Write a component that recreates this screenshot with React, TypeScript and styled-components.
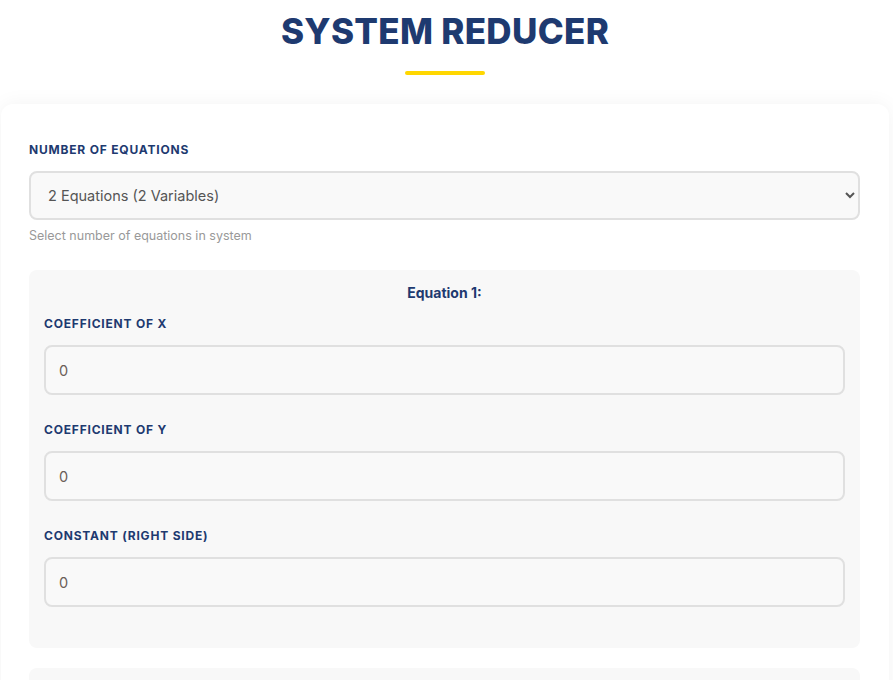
import styled, { createGlobalStyle } from 'styled-components'

const GlobalStyle = createGlobalStyle`
  * {
    box-sizing: border-box;
  }
  body {
    margin: 0;
    background: #ffffff;
    font-family: "Inter", "Open Sans", sans-serif;
    color: #333;
  }
`

const Page = styled.div`
  padding: 0 4px 0 1px;
`

const Header = styled.header`
  display: flex;
  flex-direction: column;
  align-items: center;
  padding-top: 9px;
  height: 104px;
`

const Title = styled.h1`
  margin: 0;
  font-size: 35px;
  font-weight: 800;
  letter-spacing: 0.3px;
  color: #1e3a70;
  line-height: 44px;
`

const Underline = styled.div`
  width: 80px;
  height: 4px;
  border-radius: 2px;
  background: #ffd700;
  margin-top: 18px;
`

const Card = styled.main`
  background: #ffffff;
  border-radius: 12px;
  box-shadow: 0 0 20px rgba(0, 0, 0, 0.05);
  padding: 38px 29px 40px 28px;
`

const Field = styled.div`
  display: flex;
  flex-direction: column;
  margin-bottom: 27px;
`

const Label = styled.label`
  font-size: 12px;
  font-weight: 700;
  letter-spacing: 0.8px;
  text-transform: uppercase;
  color: #1e3a70;
  line-height: 15px;
  margin-bottom: 14px;
`

const Select = styled.select`
  height: 49px;
  padding: 0 13px;
  border: 2px solid #e0e0e0;
  border-radius: 8px;
  background: #f9f9f9;
  font-family: inherit;
  font-size: 14.5px;
  color: #555;
  outline: none;
`

const Hint = styled.small`
  margin-top: 8px;
  font-size: 12.5px;
  color: #999;
`

const EquationBox = styled.section`
  background: #f8f8f8;
  border-radius: 8px;
  padding: 15px 15px 14px 15px;
  margin-bottom: 20px;
`

const EquationTitle = styled.h3`
  margin: 0 0 16px;
  text-align: center;
  font-size: 14px;
  font-weight: 700;
  color: #1e3a70;
  line-height: 15px;
`

const Input = styled.input`
  height: 50px;
  padding: 0 13px;
  border: 2px solid #e0e0e0;
  border-radius: 8px;
  background: #f9f9f9;
  font-family: inherit;
  font-size: 14.5px;
  color: #6b5f57;
  outline: none;
`

const fields = ['Coefficient of x', 'Coefficient of y', 'Constant (right side)']

export default function App() {
  return (
    <Page>
      <GlobalStyle />
      <Header>
        <Title>SYSTEM REDUCER</Title>
        <Underline />
      </Header>
      <Card>
        <Field>
          <Label>Number of Equations</Label>
          <Select defaultValue="2">
            <option value="2">2 Equations (2 Variables)</option>
            <option value="3">3 Equations (3 Variables)</option>
          </Select>
          <Hint>Select number of equations in system</Hint>
        </Field>
        {[1, 2].map((n) => (
          <EquationBox key={n}>
            <EquationTitle>Equation {n}:</EquationTitle>
            {fields.map((f) => (
              <Field key={f}>
                <Label>{f}</Label>
                <Input type="number" defaultValue="0" />
              </Field>
            ))}
          </EquationBox>
        ))}
      </Card>
    </Page>
  )
}
